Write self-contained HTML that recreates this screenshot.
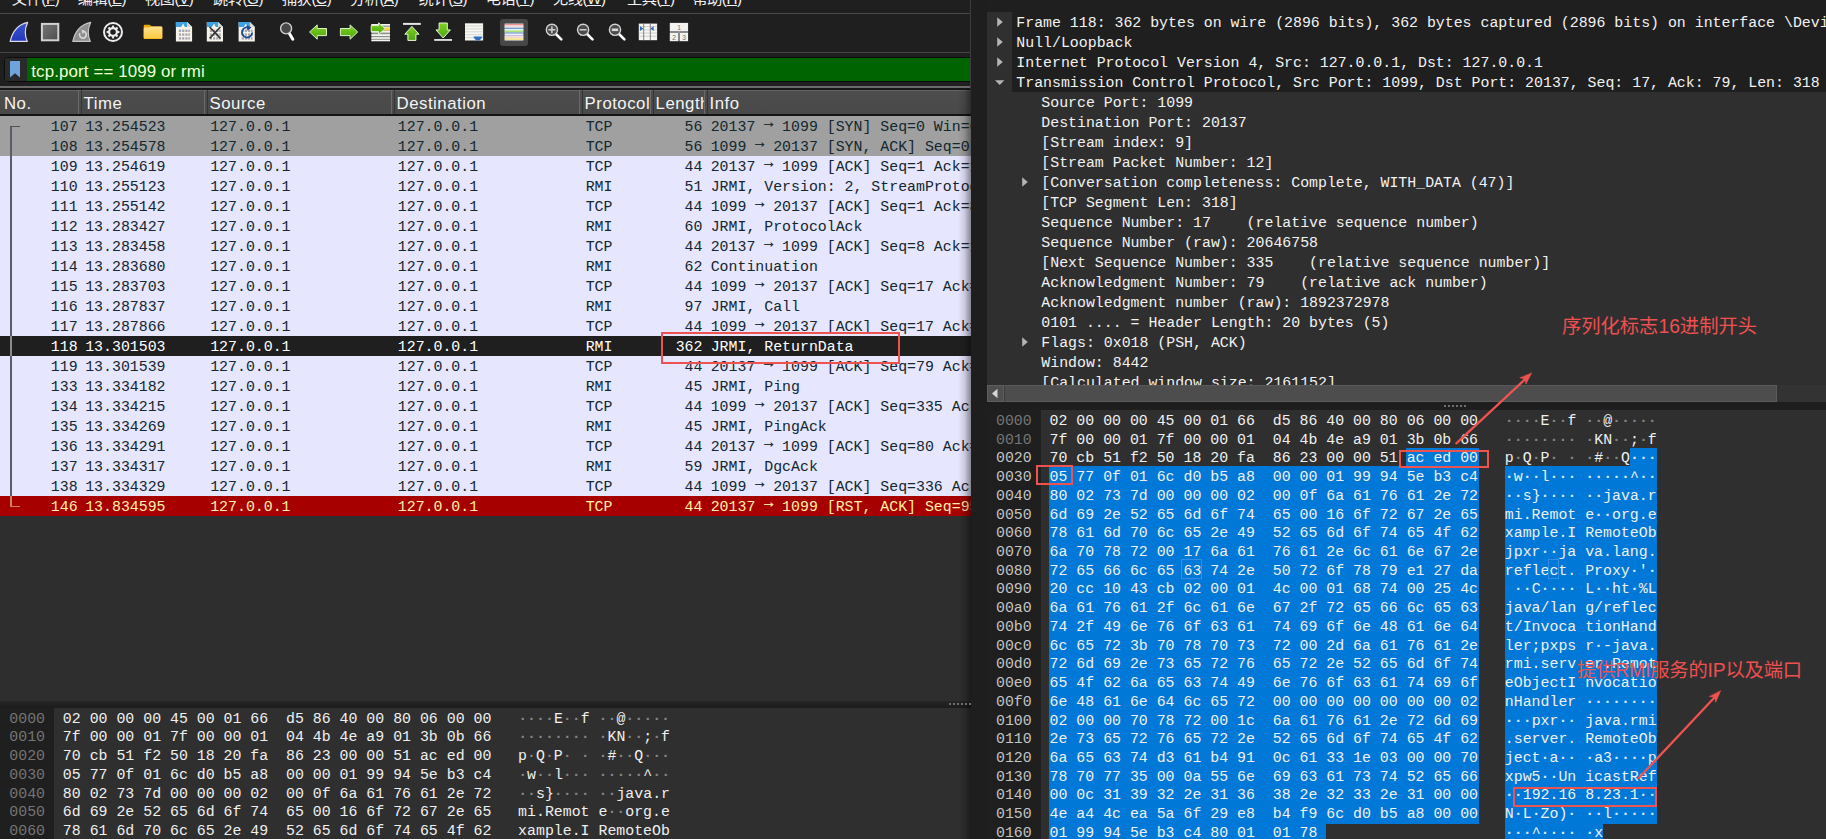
<!DOCTYPE html>
<html lang="zh-CN"><head><meta charset="utf-8"><title>Wireshark RMI</title>
<style>
*{box-sizing:border-box;margin:0;padding:0}
html,body{width:1826px;height:839px;overflow:hidden;background:#1f1f1f}
body{position:relative;font-family:"Liberation Sans","Noto Sans CJK SC",sans-serif;color:#f0f0f0}
.abs,.pr,.tr,.mi,.ar,.hl,.box,.lbl{position:absolute}
.mono,.pr,.tr,.hex{font-family:"Liberation Mono",monospace;font-size:14.89px;white-space:pre}
/* menu */
.mi{top:-11.3px;font-size:15.2px;letter-spacing:-.45px;line-height:20px;color:#f2f2f2;white-space:nowrap}
.mi u{text-decoration:underline;text-underline-offset:1px}
/* packet list */
.pr{left:0;width:971px;height:20px;line-height:20px;background:#e7e6ff;color:#12272e;overflow:hidden}
.pr.syn{background:#a0a0a0}
.pr.sel{background:#1f1f1f;color:#fff}
.pr.rst{background:#a60000;color:#fff2a6}
.pr .c{position:absolute;top:0.5px}
.pr .no{right:893.4px}
.pr .tm{left:85.2px}
.pr .sr{left:210.2px}
.pr .ds{left:397.8px}
.pr .pt{left:585.7px}
.pr .ln{right:268.6px}
.pr .inf{left:710.7px}
.pr u{text-decoration:none;position:relative;top:-3.1px;font-weight:bold;-webkit-text-stroke:.35px currentColor}
.hd{position:absolute;top:91px;height:23.4px;line-height:26.2px;font-size:16.8px;letter-spacing:.5px;color:#f4f4f4;white-space:nowrap;overflow:hidden;padding-left:3.6px}
.hdl{position:absolute;top:90px;width:1px;height:24.4px;background:#6a6a6a}
.hdd{position:absolute;top:90px;width:1px;height:24.4px;background:#353535}
/* tree */
.tr{height:20px;line-height:22px;color:#f2f2f2}
/* hex */
.hex{position:absolute;color:#f0f0f0}
.hl{left:0;height:18.73px;line-height:18.73px;white-space:pre}
.hl b{font-weight:normal;color:#757575}
.hl i{font-style:normal;color:#858585;font-weight:bold}
.hl.s i{color:#d6e9fb}
.hl.s b,.hl.p b{color:#c4c4c4}
.hl.p i.h{color:#d6e9fb}
.box{border:2px solid #ef5350}
.lbl{color:#f0504f;white-space:nowrap;font-family:"Liberation Sans","Noto Sans CJK SC",sans-serif}
</style></head><body>
<div class="abs" style="left:0;top:0;width:971px;height:14px;background:#1f1f1f;overflow:hidden">
<span class="mi" style="left:11.8px">文件(<u>F</u>)</span>
<span class="mi" style="left:77.8px">编辑(<u>E</u>)</span>
<span class="mi" style="left:145.0px">视图(<u>V</u>)</span>
<span class="mi" style="left:213.0px">跳转(<u>G</u>)</span>
<span class="mi" style="left:282.0px">捕获(<u>C</u>)</span>
<span class="mi" style="left:350.0px">分析(<u>A</u>)</span>
<span class="mi" style="left:418.7px">统计(<u>S</u>)</span>
<span class="mi" style="left:485.8px">电话(<u>Y</u>)</span>
<span class="mi" style="left:553.0px">无线(<u>W</u>)</span>
<span class="mi" style="left:627.0px">工具(<u>T</u>)</span>
<span class="mi" style="left:692.4px">帮助(<u>H</u>)</span>
</div>
<div class="abs" style="left:0;top:13px;width:971px;height:1px;background:#4a4a4a"></div>
<div class="abs" style="left:0;top:14px;width:971px;height:38px;background:#1f1f1f"></div>
<div class="abs" style="left:0;top:52px;width:971px;height:1px;background:#454545"></div>
<div class="abs" style="left:500px;top:19px;width:28px;height:27px;background:#474747;border-radius:3px"></div>
<svg class="abs" style="left:0;top:14px" width="971" height="38" viewBox="0 14 971 38">
<defs>
<linearGradient id="gGreen" x1="0" y1="0" x2="0" y2="1"><stop offset="0" stop-color="#7ed321"/><stop offset="1" stop-color="#4ea60e"/></linearGradient>
<linearGradient id="gFold" x1="0" y1="0" x2="0" y2="1"><stop offset="0" stop-color="#ffe28f"/><stop offset="1" stop-color="#ffc940"/></linearGradient>
<linearGradient id="gStop" x1="0" y1="0" x2="1" y2="1"><stop offset="0" stop-color="#757575"/><stop offset="1" stop-color="#4f4f4f"/></linearGradient>
<linearGradient id="gFin" x1="0" y1="0" x2="0" y2="1"><stop offset="0" stop-color="#3a55d6"/><stop offset="1" stop-color="#2438b8"/></linearGradient>
</defs>
<!-- shark fin start -->
<path d="M10.2 41.4 C12.5 31 18.5 24.5 27.6 22.4 C24.6 29 24.6 35.5 27.3 41.4 Z" fill="url(#gFin)" stroke="#dcdcec" stroke-width="1.2" stroke-linejoin="round"/>
<!-- stop -->
<rect x="41.9" y="23.9" width="16.4" height="16.4" fill="url(#gStop)" stroke="#d2d2d2" stroke-width="2"/>
<!-- restart fin -->
<path d="M72.8 41.4 C75.1 31 81.1 24.5 90.6 22.4 C87.6 29 87.6 35.5 90.3 41.4 Z" fill="#8f8f8f" stroke="#c6c6c6" stroke-width="1.2" stroke-linejoin="round"/>
<path d="M79.9 33.2 A3.4 3.4 0 1 0 84.2 31.6" fill="none" stroke="#d9d9d9" stroke-width="1.6"/>
<path d="M81.4 29.6 L85.4 31 L82.6 34 Z" fill="#d9d9d9"/>
<!-- options gear -->
<circle cx="113" cy="32" r="9" fill="none" stroke="#ececec" stroke-width="2"/>
<circle cx="113" cy="32" r="3.9" fill="none" stroke="#ececec" stroke-width="2.2"/>
<g stroke="#ececec" stroke-width="2.2" stroke-linecap="butt">
<line x1="113" y1="25.6" x2="113" y2="27.6"/><line x1="113" y1="36.4" x2="113" y2="38.4"/>
<line x1="106.6" y1="32" x2="108.6" y2="32"/><line x1="117.4" y1="32" x2="119.4" y2="32"/>
<line x1="108.5" y1="27.5" x2="109.9" y2="28.9"/><line x1="116.1" y1="35.1" x2="117.5" y2="36.5"/>
<line x1="108.5" y1="36.5" x2="109.9" y2="35.1"/><line x1="116.1" y1="28.9" x2="117.5" y2="27.5"/>
</g>
<!-- folder -->
<path d="M143.7 25.8 Q143.7 24.7 144.8 24.7 H149.6 L151.6 26.4 H161.1 Q162.3 26.4 162.3 27.6 V37.9 Q162.3 39.1 161.1 39.1 H144.9 Q143.7 39.1 143.7 37.9 Z" fill="#eaa800"/>
<path d="M143.7 28.6 Q143.7 27.4 144.9 27.4 H149.4 L151.2 26.4 H161.1 Q162.3 26.4 162.3 27.6 V37.5 Q162.3 38.6 161.1 38.6 H144.9 Q143.7 38.6 143.7 37.5 Z" fill="url(#gFold)"/>
<!-- docs -->
<g transform="translate(175.9 22)"><path d="M0 0 H11.2 L16.2 5 V19.6 H0 Z" fill="#f6f4ea"/>
 <path d="M0 0 H11.2 L16.2 5 H0 Z" fill="#3fa0e2"/>
 <path d="M5.2 4.9 L7.3 1.6 L9 4.9 Z" fill="#f6f4ea"/>
 <path d="M11.2 0 L16.2 5 H11.2 Z" fill="#dcdcd2"/>
 <g fill="#a9a6b0"><rect x="3" y="7.6" width="2.2" height="2.4"/><rect x="6.2" y="7.6" width="2.2" height="2.4"/><rect x="9.4" y="7.6" width="2.2" height="2.4"/><rect x="12.4" y="7.6" width="1.6" height="2.4"/>
 <rect x="3" y="11.4" width="2.2" height="2.4"/><rect x="6.2" y="11.4" width="2.2" height="2.4"/><rect x="9.4" y="11.4" width="2.2" height="2.4"/><rect x="12.4" y="11.4" width="1.6" height="2.4"/>
 <rect x="3" y="15.2" width="2.2" height="2.4"/><rect x="6.2" y="15.2" width="2.2" height="2.4"/><rect x="9.4" y="15.2" width="2.2" height="2.4"/><rect x="12.4" y="15.2" width="1.6" height="2.4"/></g></g>
<g transform="translate(206.8 22)"><path d="M0 0 H11.2 L16.2 5 V19.6 H0 Z" fill="#f6f4ea"/>
 <path d="M0 0 H11.2 L16.2 5 H0 Z" fill="#3fa0e2"/>
 <path d="M5.2 4.9 L7.3 1.6 L9 4.9 Z" fill="#f6f4ea"/>
 <path d="M11.2 0 L16.2 5 H11.2 Z" fill="#dcdcd2"/>
 <g fill="#a9a6b0"><rect x="3" y="7.6" width="2.2" height="2.4"/><rect x="6.2" y="7.6" width="2.2" height="2.4"/><rect x="9.4" y="7.6" width="2.2" height="2.4"/><rect x="12.4" y="7.6" width="1.6" height="2.4"/>
 <rect x="3" y="11.4" width="2.2" height="2.4"/><rect x="6.2" y="11.4" width="2.2" height="2.4"/><rect x="9.4" y="11.4" width="2.2" height="2.4"/><rect x="12.4" y="11.4" width="1.6" height="2.4"/>
 <rect x="3" y="15.2" width="2.2" height="2.4"/><rect x="6.2" y="15.2" width="2.2" height="2.4"/><rect x="9.4" y="15.2" width="2.2" height="2.4"/><rect x="12.4" y="15.2" width="1.6" height="2.4"/></g></g>
<path d="M209.6 27 L220.4 38.4 M220.4 27 L209.6 38.4" stroke="#333638" stroke-width="1.7" fill="none"/>
<g transform="translate(238.6 22)"><path d="M0 0 H11.2 L16.2 5 V19.6 H0 Z" fill="#f6f4ea"/>
 <path d="M0 0 H11.2 L16.2 5 H0 Z" fill="#3fa0e2"/>
 <path d="M5.2 4.9 L7.3 1.6 L9 4.9 Z" fill="#f6f4ea"/>
 <path d="M11.2 0 L16.2 5 H11.2 Z" fill="#dcdcd2"/>
 <g fill="#a9a6b0"><rect x="3" y="7.6" width="2.2" height="2.4"/><rect x="6.2" y="7.6" width="2.2" height="2.4"/><rect x="9.4" y="7.6" width="2.2" height="2.4"/><rect x="12.4" y="7.6" width="1.6" height="2.4"/>
 <rect x="3" y="11.4" width="2.2" height="2.4"/><rect x="6.2" y="11.4" width="2.2" height="2.4"/><rect x="9.4" y="11.4" width="2.2" height="2.4"/><rect x="12.4" y="11.4" width="1.6" height="2.4"/>
 <rect x="3" y="15.2" width="2.2" height="2.4"/><rect x="6.2" y="15.2" width="2.2" height="2.4"/><rect x="9.4" y="15.2" width="2.2" height="2.4"/><rect x="12.4" y="15.2" width="1.6" height="2.4"/></g></g>
<path d="M249.9 28.1 A5.1 5.1 0 1 0 252.2 32.4" fill="none" stroke="#1f4d8f" stroke-width="1.8"/>
<path d="M246.6 25.2 L251.6 27.6 L247.4 30.8 Z" fill="#1f4d8f"/>
<!-- find -->
<line x1="289.4" y1="33.4" x2="292.8" y2="39.2" stroke="#fff" stroke-width="3" stroke-linecap="round"/>
<circle cx="286.1" cy="28.4" r="5.5" fill="#484848" stroke="#d0d0d0" stroke-width="1.4"/>
<!-- back / forward -->
<path d="M309.6 32 L317.2 24.9 V28.5 H326.5 V35.6 H317.2 V39.2 Z" fill="url(#gGreen)" stroke="#dff3c8" stroke-width="1" stroke-linejoin="round"/>
<path d="M357.7 32 L350.1 24.9 V28.5 H340.4 V35.6 H350.1 V39.2 Z" fill="url(#gGreen)" stroke="#dff3c8" stroke-width="1" stroke-linejoin="round"/>
<!-- goto packet -->
<rect x="371.4" y="24" width="18.6" height="17.2" fill="#8d8f8a"/>
<g fill="#f4f4f0"><rect x="371.4" y="24" width="18.6" height="1.6"/><rect x="371.4" y="26.8" width="18.6" height="1.7"/><rect x="371.4" y="30.9" width="18.6" height="1.7"/><rect x="371.4" y="34.2" width="18.6" height="1.8"/><rect x="371.4" y="37.2" width="18.6" height="1.6"/><rect x="371.4" y="39.8" width="18.6" height="1.4"/></g>
<rect x="383.5" y="27.6" width="6.5" height="3" fill="#ffd23f"/>
<path d="M385.2 28.6 L378.6 22.8 V25.6 H371.2 V31.6 H378.6 V34.4 Z" fill="url(#gGreen)" stroke="#dff3c8" stroke-width="1" stroke-linejoin="round"/>
<!-- first -->
<rect x="403" y="22.9" width="17.8" height="2" fill="#e4e4e4"/>
<path d="M411.9 26.4 L419 34.2 H415.9 V40.4 H407.9 V34.2 H404.8 Z" fill="url(#gGreen)" stroke="#eaf6dc" stroke-width="1" stroke-linejoin="round"/>
<!-- last -->
<path d="M443.2 38 L450.4 29.9 H447.3 V23 H439.1 V29.9 H436 Z" fill="url(#gGreen)" stroke="#eaf6dc" stroke-width="1" stroke-linejoin="round"/>
<rect x="434.2" y="39" width="17.8" height="1.9" fill="#dcdcdc"/>
<!-- autoscroll -->
<rect x="465" y="23.3" width="18.1" height="17.2" fill="#f7f7f4"/>
<g fill="#cfcfcc"><rect x="465" y="25.6" width="18.1" height="0.9"/><rect x="465" y="28.5" width="18.1" height="0.9"/><rect x="465" y="31.4" width="18.1" height="0.9"/><rect x="465" y="34.3" width="18.1" height="0.9"/><rect x="465" y="37.2" width="18.1" height="0.9"/></g>
<path d="M473.4 36.4 H482.4 Q481 40.4 477.9 40.5 Q474.8 40.4 473.4 36.4 Z" fill="#2f6fc2"/>
<!-- colorize -->
<rect x="504.7" y="23.6" width="18.6" height="16.9" fill="#fafafa"/>
<rect x="504.7" y="24.3" width="18.6" height="1.1" fill="#ea6b6b"/>
<rect x="504.7" y="25.6" width="18.6" height="1.9" fill="#f2dfe0"/>
<rect x="504.7" y="27.7" width="18.6" height="1.1" fill="#5486c8"/>
<rect x="504.7" y="29" width="18.6" height="1.2" fill="#e2f4f8"/>
<rect x="504.7" y="30.4" width="18.6" height="1.9" fill="#a9e27a"/>
<rect x="504.7" y="32.5" width="18.6" height="1" fill="#5486c8"/>
<rect x="504.7" y="34.9" width="18.6" height="0.9" fill="#c0a8e0"/>
<rect x="504.7" y="36.2" width="18.6" height="1.9" fill="#f0d9d2"/>
<rect x="504.7" y="38.3" width="18.6" height="1.6" fill="#f6e183"/>
<!-- zoom in/out/1:1 -->
<g transform="translate(551.9 29.8)"><line x1="4" y1="4.2" x2="9.4" y2="9.6" stroke="#fff" stroke-width="2.6" stroke-linecap="round"/>
 <circle cx="0" cy="0" r="5.6" fill="#4b4b4b" stroke="#d4d4d4" stroke-width="1.4"/></g>
<path d="M548.4 29.8 H555.4 M551.9 26.3 V33.3" stroke="#d0d0d0" stroke-width="1.5"/>
<g transform="translate(583.1 29.8)"><line x1="4" y1="4.2" x2="9.4" y2="9.6" stroke="#fff" stroke-width="2.6" stroke-linecap="round"/>
 <circle cx="0" cy="0" r="5.6" fill="#4b4b4b" stroke="#d4d4d4" stroke-width="1.4"/></g>
<path d="M579.6 29.8 H586.6" stroke="#d0d0d0" stroke-width="1.5"/>
<g transform="translate(615 29.8)"><line x1="4" y1="4.2" x2="9.4" y2="9.6" stroke="#fff" stroke-width="2.6" stroke-linecap="round"/>
 <circle cx="0" cy="0" r="5.6" fill="#4b4b4b" stroke="#d4d4d4" stroke-width="1.4"/></g>
<rect x="611.8" y="28.5" width="6.4" height="2.6" fill="#d8d8d8"/>
<!-- resize columns -->
<rect x="638.8" y="23.6" width="18.3" height="16.6" fill="#f6f6f3"/>
<g fill="#c9c9c5"><rect x="638.8" y="26.2" width="18.3" height="0.9"/><rect x="638.8" y="29.4" width="18.3" height="0.9"/><rect x="638.8" y="32.6" width="18.3" height="0.9"/><rect x="638.8" y="35.8" width="18.3" height="0.9"/></g>
<rect x="643.1" y="23.6" width="1.1" height="16.6" fill="#8c8c8c"/><rect x="649.8" y="23.6" width="1.1" height="16.6" fill="#8c8c8c"/>
<path d="M640 26.2 L643.4 28.6 L640 31 Z" fill="#2c6cb8"/><path d="M653.6 26.2 L650.4 28.6 L653.6 31 Z" fill="#2c6cb8"/>
<!-- layout -->
<rect x="669.8" y="22.9" width="18.3" height="8.3" fill="#f2f2ef"/>
<rect x="669.8" y="32.6" width="8.4" height="8.6" fill="#f2f2ef"/><rect x="679.8" y="32.6" width="8.3" height="8.6" fill="#f2f2ef"/>
<rect x="669.8" y="31.2" width="18.3" height="1.4" fill="#9a9a9a"/><rect x="678.2" y="31.2" width="1.6" height="10" fill="#9a9a9a"/>
<g font-family="Liberation Sans, sans-serif" font-size="6.6" fill="#707070" text-anchor="middle"><text x="679" y="29.7">1</text><text x="674.2" y="39.6">2</text><text x="684" y="39.6">3</text></g>
</svg>

<div class="abs" style="left:4px;top:57px;width:967px;height:25px;background:#006400;border:1px solid #0c0c0c;border-radius:4px 0 0 4px"></div>
<div class="abs" style="left:5px;top:58px;width:22px;height:23px;background:#2a2a2a;border-radius:3px 0 0 3px"></div>
<svg class="abs" style="left:9px;top:60px" width="12" height="19" viewBox="0 0 12 19"><path d="M1 1 H11 V17.5 L6 13.2 L1 17.5 Z" fill="#6fa3dc"/></svg>
<div class="abs" style="left:31.3px;top:59.7px;height:24px;line-height:24px;font-size:16.9px;letter-spacing:.12px;color:#f4ffd8;white-space:pre">tcp.port == 1099 or rmi</div>
<div class="abs" style="left:0;top:85.7px;width:971px;height:2.4px;background:#6a6a6a"></div>
<div class="abs" style="left:0;top:88px;width:971px;height:2px;background:#171717"></div>
<div class="abs" style="left:0;top:90px;width:971px;height:1px;background:#636363"></div>
<div class="abs" style="left:0;top:91px;width:971px;height:23.4px;background:linear-gradient(#4d4d4d,#494949)"></div>
<div class="abs" style="left:0;top:114.3px;width:971px;height:1.7px;background:#141414"></div>
<div class="hd" style="left:1px;width:77px;padding-left:3px">No.</div>
<div class="hd" style="left:80px;width:124px">Time</div>
<div class="hdl" style="left:78px"></div><div class="hdd" style="left:81px"></div>
<div class="hd" style="left:206px;width:185px">Source</div>
<div class="hdl" style="left:204px"></div><div class="hdd" style="left:207px"></div>
<div class="hd" style="left:393px;width:186px">Destination</div>
<div class="hdl" style="left:391px"></div><div class="hdd" style="left:394px"></div>
<div class="hd" style="left:581px;width:69px">Protocol</div>
<div class="hdl" style="left:579px"></div><div class="hdd" style="left:582px"></div>
<div class="hd" style="left:652px;width:52px">Length</div>
<div class="hdl" style="left:650px"></div><div class="hdd" style="left:653px"></div>
<div class="hd" style="left:706px;width:264px">Info</div>
<div class="hdl" style="left:704px"></div><div class="hdd" style="left:707px"></div>
<div class="pr syn" style="top:116px"><span class="c no">107</span><span class="c tm">13.254523</span><span class="c sr">127.0.0.1</span><span class="c ds">127.0.0.1</span><span class="c pt">TCP</span><span class="c ln">56</span><span class="c inf">20137 <u>→</u> 1099 [SYN] Seq=0 Win=65535 Len=0 MSS=65495</span></div>
<div class="pr syn" style="top:136px"><span class="c no">108</span><span class="c tm">13.254578</span><span class="c sr">127.0.0.1</span><span class="c ds">127.0.0.1</span><span class="c pt">TCP</span><span class="c ln">56</span><span class="c inf">1099 <u>→</u> 20137 [SYN, ACK] Seq=0 Ack=1 Win=65535 Len=0</span></div>
<div class="pr " style="top:156px"><span class="c no">109</span><span class="c tm">13.254619</span><span class="c sr">127.0.0.1</span><span class="c ds">127.0.0.1</span><span class="c pt">TCP</span><span class="c ln">44</span><span class="c inf">20137 <u>→</u> 1099 [ACK] Seq=1 Ack=1 Win=2161152 Len=0</span></div>
<div class="pr " style="top:176px"><span class="c no">110</span><span class="c tm">13.255123</span><span class="c sr">127.0.0.1</span><span class="c ds">127.0.0.1</span><span class="c pt">RMI</span><span class="c ln">51</span><span class="c inf">JRMI, Version: 2, StreamProtocol</span></div>
<div class="pr " style="top:196px"><span class="c no">111</span><span class="c tm">13.255142</span><span class="c sr">127.0.0.1</span><span class="c ds">127.0.0.1</span><span class="c pt">TCP</span><span class="c ln">44</span><span class="c inf">1099 <u>→</u> 20137 [ACK] Seq=1 Ack=8 Win=2161152 Len=0</span></div>
<div class="pr " style="top:216px"><span class="c no">112</span><span class="c tm">13.283427</span><span class="c sr">127.0.0.1</span><span class="c ds">127.0.0.1</span><span class="c pt">RMI</span><span class="c ln">60</span><span class="c inf">JRMI, ProtocolAck</span></div>
<div class="pr " style="top:236px"><span class="c no">113</span><span class="c tm">13.283458</span><span class="c sr">127.0.0.1</span><span class="c ds">127.0.0.1</span><span class="c pt">TCP</span><span class="c ln">44</span><span class="c inf">20137 <u>→</u> 1099 [ACK] Seq=8 Ack=17 Win=2161152 Len=0</span></div>
<div class="pr " style="top:256px"><span class="c no">114</span><span class="c tm">13.283680</span><span class="c sr">127.0.0.1</span><span class="c ds">127.0.0.1</span><span class="c pt">RMI</span><span class="c ln">62</span><span class="c inf">Continuation</span></div>
<div class="pr " style="top:276px"><span class="c no">115</span><span class="c tm">13.283703</span><span class="c sr">127.0.0.1</span><span class="c ds">127.0.0.1</span><span class="c pt">TCP</span><span class="c ln">44</span><span class="c inf">1099 <u>→</u> 20137 [ACK] Seq=17 Ack=26 Win=2161152 Len=0</span></div>
<div class="pr " style="top:296px"><span class="c no">116</span><span class="c tm">13.287837</span><span class="c sr">127.0.0.1</span><span class="c ds">127.0.0.1</span><span class="c pt">RMI</span><span class="c ln">97</span><span class="c inf">JRMI, Call</span></div>
<div class="pr " style="top:316px"><span class="c no">117</span><span class="c tm">13.287866</span><span class="c sr">127.0.0.1</span><span class="c ds">127.0.0.1</span><span class="c pt">TCP</span><span class="c ln">44</span><span class="c inf">1099 <u>→</u> 20137 [ACK] Seq=17 Ack=79 Win=2161152 Len=0</span></div>
<div class="pr sel" style="top:336px"><span class="c no">118</span><span class="c tm">13.301503</span><span class="c sr">127.0.0.1</span><span class="c ds">127.0.0.1</span><span class="c pt">RMI</span><span class="c ln">362</span><span class="c inf">JRMI, ReturnData</span></div>
<div class="pr " style="top:356px"><span class="c no">119</span><span class="c tm">13.301539</span><span class="c sr">127.0.0.1</span><span class="c ds">127.0.0.1</span><span class="c pt">TCP</span><span class="c ln">44</span><span class="c inf">20137 <u>→</u> 1099 [ACK] Seq=79 Ack=335 Win=2160896 Len=0</span></div>
<div class="pr " style="top:376px"><span class="c no">133</span><span class="c tm">13.334182</span><span class="c sr">127.0.0.1</span><span class="c ds">127.0.0.1</span><span class="c pt">RMI</span><span class="c ln">45</span><span class="c inf">JRMI, Ping</span></div>
<div class="pr " style="top:396px"><span class="c no">134</span><span class="c tm">13.334215</span><span class="c sr">127.0.0.1</span><span class="c ds">127.0.0.1</span><span class="c pt">TCP</span><span class="c ln">44</span><span class="c inf">1099 <u>→</u> 20137 [ACK] Seq=335 Ack=80 Win=2161152 Len=0</span></div>
<div class="pr " style="top:416px"><span class="c no">135</span><span class="c tm">13.334269</span><span class="c sr">127.0.0.1</span><span class="c ds">127.0.0.1</span><span class="c pt">RMI</span><span class="c ln">45</span><span class="c inf">JRMI, PingAck</span></div>
<div class="pr " style="top:436px"><span class="c no">136</span><span class="c tm">13.334291</span><span class="c sr">127.0.0.1</span><span class="c ds">127.0.0.1</span><span class="c pt">TCP</span><span class="c ln">44</span><span class="c inf">20137 <u>→</u> 1099 [ACK] Seq=80 Ack=336 Win=2160896 Len=0</span></div>
<div class="pr " style="top:456px"><span class="c no">137</span><span class="c tm">13.334317</span><span class="c sr">127.0.0.1</span><span class="c ds">127.0.0.1</span><span class="c pt">RMI</span><span class="c ln">59</span><span class="c inf">JRMI, DgcAck</span></div>
<div class="pr " style="top:476px"><span class="c no">138</span><span class="c tm">13.334329</span><span class="c sr">127.0.0.1</span><span class="c ds">127.0.0.1</span><span class="c pt">TCP</span><span class="c ln">44</span><span class="c inf">1099 <u>→</u> 20137 [ACK] Seq=336 Ack=95 Win=2161152 Len=0</span></div>
<div class="pr rst" style="top:496px"><span class="c no">146</span><span class="c tm">13.834595</span><span class="c sr">127.0.0.1</span><span class="c ds">127.0.0.1</span><span class="c pt">TCP</span><span class="c ln">44</span><span class="c inf">20137 <u>→</u> 1099 [RST, ACK] Seq=95 Ack=336 Win=0 Len=0</span></div>
<div class="abs" style="left:10.2px;top:125.5px;width:1.7px;height:371px;background:#5c5c68"></div>
<div class="abs" style="left:10px;top:125.5px;width:10px;height:1.5px;background:#50505a"></div>
<div class="abs" style="left:10.2px;top:505.6px;width:10px;height:1.3px;background:#d08060"></div>
<div class="abs" style="left:10.2px;top:496px;width:1.5px;height:10.5px;background:#d08060"></div>
<div class="abs" style="left:10.2px;top:336px;width:1.7px;height:20px;background:#8a8a8a"></div>
<div class="abs" style="left:0;top:516px;width:971px;height:185px;background:#2e2e2e"></div>
<div class="abs" style="left:0;top:701px;width:971px;height:7px;background:linear-gradient(#252525,#1c1c1c)"></div>
<div class="abs" style="left:0;top:708px;width:971px;height:131px;background:#2f2f2f;overflow:hidden">
<div class="abs" style="left:0;top:0;width:54px;height:131px;background:#1f1f1f"></div>
<div class="hex" style="left:9.3px;top:1.7px;">
<div class="hl" style="top:0.00px"><b>0000</b>  02 00 00 00 45 00 01 66  d5 86 40 00 80 06 00 00   <i>·</i><i>·</i><i>·</i><i>·</i>E<i>·</i><i>·</i>f <i>·</i><i>·</i>@<i>·</i><i>·</i><i>·</i><i>·</i><i>·</i></div>
<div class="hl" style="top:18.73px"><b>0010</b>  7f 00 00 01 7f 00 00 01  04 4b 4e a9 01 3b 0b 66   <i>·</i><i>·</i><i>·</i><i>·</i><i>·</i><i>·</i><i>·</i><i>·</i> <i>·</i>KN<i>·</i><i>·</i>;<i>·</i>f</div>
<div class="hl" style="top:37.46px"><b>0020</b>  70 cb 51 f2 50 18 20 fa  86 23 00 00 51 ac ed 00   p<i>·</i>Q<i>·</i>P<i>·</i> <i>·</i> <i>·</i>#<i>·</i><i>·</i>Q<i>·</i><i>·</i><i>·</i></div>
<div class="hl" style="top:56.19px"><b>0030</b>  05 77 0f 01 6c d0 b5 a8  00 00 01 99 94 5e b3 c4   <i>·</i>w<i>·</i><i>·</i>l<i>·</i><i>·</i><i>·</i> <i>·</i><i>·</i><i>·</i><i>·</i><i>·</i>^<i>·</i><i>·</i></div>
<div class="hl" style="top:74.92px"><b>0040</b>  80 02 73 7d 00 00 00 02  00 0f 6a 61 76 61 2e 72   <i>·</i><i>·</i>s}<i>·</i><i>·</i><i>·</i><i>·</i> <i>·</i><i>·</i>java.r</div>
<div class="hl" style="top:93.65px"><b>0050</b>  6d 69 2e 52 65 6d 6f 74  65 00 16 6f 72 67 2e 65   mi.Remot e<i>·</i><i>·</i>org.e</div>
<div class="hl" style="top:112.38px"><b>0060</b>  78 61 6d 70 6c 65 2e 49  52 65 6d 6f 74 65 4f 62   xample.I RemoteOb</div>
</div></div>
<div class="abs" style="left:958px;top:89px;width:13px;height:750px;background:linear-gradient(90deg,rgba(0,0,0,0),rgba(0,0,0,.12) 50%,rgba(0,0,0,.42))"></div>
<div class="abs" style="left:971px;top:0;width:16px;height:839px;background:#1e1e1e"></div>
<div class="abs" style="left:970px;top:0;width:1px;height:89px;background:#3c3c3c"></div>
<div class="abs" style="left:987px;top:0;width:839px;height:12px;background:#1f1f1f"></div>
<div class="abs" style="left:987px;top:12px;width:839px;height:373px;background:#2f2f2f"></div>
<div class="abs" style="left:1012px;top:12px;width:814px;height:80px;background:#1f1f1f"></div>
<div class="abs" style="left:987px;top:12px;width:839px;height:373px;overflow:hidden"><div style="position:absolute;left:-987px;top:-12px">
<svg class="ar" style="left:996px;top:16px" width="10" height="12" viewBox="0 0 10 12"><path d="M1.2 1.2 L6.8 6 L1.2 10.8 Z" fill="#b4b4b4"/></svg><div class="tr" style="left:1016.3px;top:12px">Frame 118: 362 bytes on wire (2896 bits), 362 bytes captured (2896 bits) on interface \Device\NPF_Loopback, id 0</div>
<svg class="ar" style="left:996px;top:36px" width="10" height="12" viewBox="0 0 10 12"><path d="M1.2 1.2 L6.8 6 L1.2 10.8 Z" fill="#b4b4b4"/></svg><div class="tr" style="left:1016.3px;top:32px">Null/Loopback</div>
<svg class="ar" style="left:996px;top:56px" width="10" height="12" viewBox="0 0 10 12"><path d="M1.2 1.2 L6.8 6 L1.2 10.8 Z" fill="#b4b4b4"/></svg><div class="tr" style="left:1016.3px;top:52px">Internet Protocol Version 4, Src: 127.0.0.1, Dst: 127.0.0.1</div>
<svg class="ar" style="left:994px;top:78px" width="12" height="10" viewBox="0 0 12 10"><path d="M1 2.2 L10.4 2.2 L5.7 7 Z" fill="#b4b4b4"/></svg><div class="tr" style="left:1016.3px;top:72px">Transmission Control Protocol, Src Port: 1099, Dst Port: 20137, Seq: 17, Ack: 79, Len: 318</div>
<div class="tr" style="left:1041.3px;top:92px">Source Port: 1099</div>
<div class="tr" style="left:1041.3px;top:112px">Destination Port: 20137</div>
<div class="tr" style="left:1041.3px;top:132px">[Stream index: 9]</div>
<div class="tr" style="left:1041.3px;top:152px">[Stream Packet Number: 12]</div>
<svg class="ar" style="left:1021px;top:176px" width="10" height="12" viewBox="0 0 10 12"><path d="M1.2 1.2 L6.8 6 L1.2 10.8 Z" fill="#b4b4b4"/></svg><div class="tr" style="left:1041.3px;top:172px">[Conversation completeness: Complete, WITH_DATA (47)]</div>
<div class="tr" style="left:1041.3px;top:192px">[TCP Segment Len: 318]</div>
<div class="tr" style="left:1041.3px;top:212px">Sequence Number: 17    (relative sequence number)</div>
<div class="tr" style="left:1041.3px;top:232px">Sequence Number (raw): 20646758</div>
<div class="tr" style="left:1041.3px;top:252px">[Next Sequence Number: 335    (relative sequence number)]</div>
<div class="tr" style="left:1041.3px;top:272px">Acknowledgment Number: 79    (relative ack number)</div>
<div class="tr" style="left:1041.3px;top:292px">Acknowledgment number (raw): 1892372978</div>
<div class="tr" style="left:1041.3px;top:312px">0101 .... = Header Length: 20 bytes (5)</div>
<svg class="ar" style="left:1021px;top:336px" width="10" height="12" viewBox="0 0 10 12"><path d="M1.2 1.2 L6.8 6 L1.2 10.8 Z" fill="#b4b4b4"/></svg><div class="tr" style="left:1041.3px;top:332px">Flags: 0x018 (PSH, ACK)</div>
<div class="tr" style="left:1041.3px;top:352px">Window: 8442</div>
<div class="tr" style="left:1041.3px;top:372px">[Calculated window size: 2161152]</div>
</div></div>
<div class="abs" style="left:987px;top:385px;width:839px;height:17px;background:#333"></div>
<div class="abs" style="left:987px;top:385px;width:17px;height:17px;background:#4f4f4f;border:1px solid #5e5e5e"></div>
<svg class="abs" style="left:991px;top:388px" width="8" height="11" viewBox="0 0 8 11"><path d="M6.5 0.8 L1 5.5 L6.5 10.2 Z" fill="#d6d6d6"/></svg>
<div class="abs" style="left:1004px;top:385px;width:773px;height:17px;background:#4d4d4d;border:1px solid #5a5a5a;border-left-color:#3a3a3a"></div>
<div class="abs" style="left:987px;top:402px;width:839px;height:8px;background:#1e1e1e"></div>
<div class="abs" style="left:987px;top:410px;width:839px;height:429px;background:#2f2f2f;overflow:hidden">
<div class="abs" style="left:0;top:0;width:54px;height:429px;background:#1f1f1f"></div>
<div class="abs" style="left:419.41px;top:37.66px;width:73.08px;height:19.23px;background:#0078d7"></div>
<div class="abs" style="left:643.09px;top:37.66px;width:27.11px;height:19.23px;background:#0078d7"></div>
<div class="abs" style="left:61.81px;top:56.39px;width:430.68px;height:357.61px;background:#0078d7"></div>
<div class="abs" style="left:517.80px;top:56.39px;width:152.39px;height:357.61px;background:#0078d7"></div>
<div class="abs" style="left:61.81px;top:413.50px;width:277.29px;height:15.50px;background:#0078d7"></div>
<div class="abs" style="left:517.80px;top:413.50px;width:98.58px;height:15.50px;background:#0078d7"></div>
<div class="hex" style="left:9.00px;top:1.90px">
<div class="hl" style="top:0.00px"><b>0000</b>  02 00 00 00 45 00 01 66  d5 86 40 00 80 06 00 00   <i>·</i><i>·</i><i>·</i><i>·</i>E<i>·</i><i>·</i>f <i>·</i><i>·</i>@<i>·</i><i>·</i><i>·</i><i>·</i><i>·</i></div>
<div class="hl" style="top:18.73px"><b>0010</b>  7f 00 00 01 7f 00 00 01  04 4b 4e a9 01 3b 0b 66   <i>·</i><i>·</i><i>·</i><i>·</i><i>·</i><i>·</i><i>·</i><i>·</i> <i>·</i>KN<i>·</i><i>·</i>;<i>·</i>f</div>
<div class="hl p" style="top:37.46px"><b>0020</b>  70 cb 51 f2 50 18 20 fa  86 23 00 00 51 ac ed 00   p<i>·</i>Q<i>·</i>P<i>·</i> <i>·</i> <i>·</i>#<i>·</i><i>·</i>Q<i class="h">·</i><i class="h">·</i><i class="h">·</i></div>
<div class="hl s" style="top:56.19px"><b>0030</b>  05 77 0f 01 6c d0 b5 a8  00 00 01 99 94 5e b3 c4   <i>·</i>w<i>·</i><i>·</i>l<i>·</i><i>·</i><i>·</i> <i>·</i><i>·</i><i>·</i><i>·</i><i>·</i>^<i>·</i><i>·</i></div>
<div class="hl s" style="top:74.92px"><b>0040</b>  80 02 73 7d 00 00 00 02  00 0f 6a 61 76 61 2e 72   <i>·</i><i>·</i>s}<i>·</i><i>·</i><i>·</i><i>·</i> <i>·</i><i>·</i>java.r</div>
<div class="hl s" style="top:93.65px"><b>0050</b>  6d 69 2e 52 65 6d 6f 74  65 00 16 6f 72 67 2e 65   mi.Remot e<i>·</i><i>·</i>org.e</div>
<div class="hl s" style="top:112.38px"><b>0060</b>  78 61 6d 70 6c 65 2e 49  52 65 6d 6f 74 65 4f 62   xample.I RemoteOb</div>
<div class="hl s" style="top:131.11px"><b>0070</b>  6a 70 78 72 00 17 6a 61  76 61 2e 6c 61 6e 67 2e   jpxr<i>·</i><i>·</i>ja va.lang.</div>
<div class="hl s" style="top:149.84px"><b>0080</b>  72 65 66 6c 65 63 74 2e  50 72 6f 78 79 e1 27 da   reflect. Proxy<i>·</i>'<i>·</i></div>
<div class="hl s" style="top:168.57px"><b>0090</b>  20 cc 10 43 cb 02 00 01  4c 00 01 68 74 00 25 4c    <i>·</i><i>·</i>C<i>·</i><i>·</i><i>·</i><i>·</i> L<i>·</i><i>·</i>ht<i>·</i>%L</div>
<div class="hl s" style="top:187.30px"><b>00a0</b>  6a 61 76 61 2f 6c 61 6e  67 2f 72 65 66 6c 65 63   java/lan g/reflec</div>
<div class="hl s" style="top:206.03px"><b>00b0</b>  74 2f 49 6e 76 6f 63 61  74 69 6f 6e 48 61 6e 64   t/Invoca tionHand</div>
<div class="hl s" style="top:224.76px"><b>00c0</b>  6c 65 72 3b 70 78 70 73  72 00 2d 6a 61 76 61 2e   ler;pxps r<i>·</i>-java.</div>
<div class="hl s" style="top:243.49px"><b>00d0</b>  72 6d 69 2e 73 65 72 76  65 72 2e 52 65 6d 6f 74   rmi.serv er.Remot</div>
<div class="hl s" style="top:262.22px"><b>00e0</b>  65 4f 62 6a 65 63 74 49  6e 76 6f 63 61 74 69 6f   eObjectI nvocatio</div>
<div class="hl s" style="top:280.95px"><b>00f0</b>  6e 48 61 6e 64 6c 65 72  00 00 00 00 00 00 00 02   nHandler <i>·</i><i>·</i><i>·</i><i>·</i><i>·</i><i>·</i><i>·</i><i>·</i></div>
<div class="hl s" style="top:299.68px"><b>0100</b>  02 00 00 70 78 72 00 1c  6a 61 76 61 2e 72 6d 69   <i>·</i><i>·</i><i>·</i>pxr<i>·</i><i>·</i> java.rmi</div>
<div class="hl s" style="top:318.41px"><b>0110</b>  2e 73 65 72 76 65 72 2e  52 65 6d 6f 74 65 4f 62   .server. RemoteOb</div>
<div class="hl s" style="top:337.14px"><b>0120</b>  6a 65 63 74 d3 61 b4 91  0c 61 33 1e 03 00 00 70   ject<i>·</i>a<i>·</i><i>·</i> <i>·</i>a3<i>·</i><i>·</i><i>·</i><i>·</i>p</div>
<div class="hl s" style="top:355.87px"><b>0130</b>  78 70 77 35 00 0a 55 6e  69 63 61 73 74 52 65 66   xpw5<i>·</i><i>·</i>Un icastRef</div>
<div class="hl s" style="top:374.60px"><b>0140</b>  00 0c 31 39 32 2e 31 36  38 2e 32 33 2e 31 00 00   <i>·</i><i>·</i>192.16 8.23.1<i>·</i><i>·</i></div>
<div class="hl s" style="top:393.33px"><b>0150</b>  4e a4 4c ea 5a 6f 29 e8  b4 f9 6c d0 b5 a8 00 00   N<i>·</i>L<i>·</i>Zo)<i>·</i> <i>·</i><i>·</i>l<i>·</i><i>·</i><i>·</i><i>·</i><i>·</i></div>
<div class="hl s" style="top:412.06px"><b>0160</b>  01 99 94 5e b3 c4 80 01  01 78                     <i>·</i><i>·</i><i>·</i>^<i>·</i><i>·</i><i>·</i><i>·</i> <i>·</i>x</div>
</div>
<div class="abs" style="left:194.4px;top:149.2px;width:20.6px;height:19.8px;border:1px solid #2f90e6"></div>
<div class="abs" style="left:561.3px;top:149.2px;width:10.8px;height:19.8px;border:1px solid #2f90e6"></div>
</div>
<div class="abs" style="left:1444px;top:405px;width:22px;height:2px;background:repeating-linear-gradient(90deg,#6e6e6e 0 2px,transparent 2px 4px)"></div>
<div class="abs" style="left:949px;top:703px;width:22px;height:2px;background:repeating-linear-gradient(90deg,#6e6e6e 0 2px,transparent 2px 4px)"></div>
<div class="box" style="left:661.2px;top:332.0px;width:239.1px;height:32.0px"></div>
<div class="box" style="left:1399.0px;top:449.6px;width:89.8px;height:18.0px"></div>
<div class="box" style="left:1036.0px;top:465.0px;width:37.0px;height:19.8px"></div>
<div class="box" style="left:1513.0px;top:786.9px;width:144.4px;height:19.8px"></div>
<svg class="abs" style="left:0;top:0;pointer-events:none" width="1826" height="839" viewBox="0 0 1826 839"><g stroke="#ef5350" stroke-width="2.3" fill="#ef5350" stroke-linecap="round"><line x1="1456.3" y1="443.3" x2="1525.3" y2="379.0"/><path d="M1531.5 373.2 L1525.9 384.1 L1525.3 379.0 L1520.2 377.9 Z" stroke-width="0.6"/><line x1="1638.8" y1="778" x2="1714.7" y2="697.2"/><path d="M1720.5 691.0 L1715.7 702.3 L1714.7 697.2 L1709.6 696.5 Z" stroke-width="0.6"/></g></svg>
<div class="lbl" style="left:1562px;top:311.9px;font-size:19.3px;line-height:30px">序列化标志16进制开头</div>
<div class="lbl" style="left:1577px;top:655.5px;font-size:19.3px;letter-spacing:-.15px;line-height:30px">提供RMI服务的IP以及端口</div>
</body></html>
